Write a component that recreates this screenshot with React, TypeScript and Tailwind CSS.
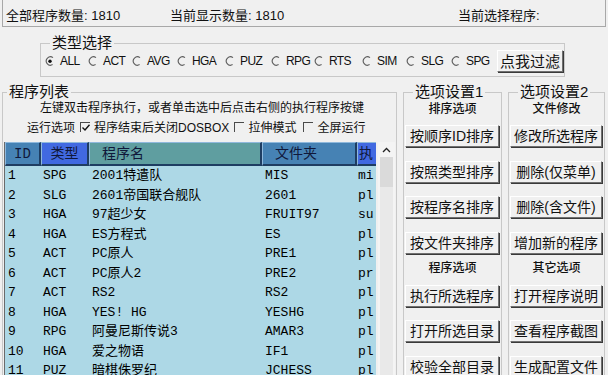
import React from 'react';

const ui = "font-['Liberation_Sans','Noto_Sans_CJK_SC',sans-serif]";
const mono = "font-['Liberation_Mono','Noto_Sans_CJK_SC',monospace]";

const types = [
  { label: 'ALL', w: 'w-[43px]', on: true },
  { label: 'ACT', w: 'w-[44px]' },
  { label: 'AVG', w: 'w-[45px]' },
  { label: 'HGA', w: 'w-[48px]' },
  { label: 'PUZ', w: 'w-[46px]' },
  { label: 'RPG', w: 'w-[43px]' },
  { label: 'RTS', w: 'w-[48px]' },
  { label: 'SIM', w: 'w-[44px]' },
  { label: 'SLG', w: 'w-[45px]' },
  { label: 'SPG', w: 'w-[41px]' },
];

const rows = [
  ['1', 'SPG', '2001特遣队', 'MIS', 'mi'],
  ['2', 'SLG', '2601帝国联合舰队', '2601', 'pl'],
  ['3', 'HGA', '97超少女', 'FRUIT97', 'su'],
  ['4', 'HGA', 'ES方程式', 'ES', 'pl'],
  ['5', 'ACT', 'PC原人', 'PRE1', 'pl'],
  ['6', 'ACT', 'PC原人2', 'PRE2', 'pr'],
  ['7', 'ACT', 'RS2', 'RS2', 'pl'],
  ['8', 'HGA', 'YES! HG', 'YESHG', 'pl'],
  ['9', 'RPG', '阿曼尼斯传说3', 'AMAR3', 'pl'],
  ['10', 'HGA', '爱之物语', 'IF1', 'pl'],
  ['11', 'PUZ', '暗棋侏罗纪', 'JCHESS', 'pl'],
];

const cols = [
  { w: 'w-[36px]', bg: 'bg-[#4682b4]', head: 'ID', cls: 'justify-center', pl: 'pl-[3px]' },
  { w: 'w-[48px]', bg: 'bg-[#4169e1]', head: '类型', cls: 'justify-center', pl: 'pl-[2px]' },
  { w: 'w-[173px]', bg: 'bg-[#5f9ea0]', head: '程序名', cls: 'pl-[12px]', pl: 'pl-[3px]' },
  { w: 'w-[95px]', bg: 'bg-[#4682b4]', head: '文件夹', cls: 'pl-[12px]', pl: 'pl-[3px]' },
  { w: 'w-[70px]', bg: 'bg-[#4169e1]', head: '执', cls: 'pl-[1px]', pl: 'pl-[1px]' },
];

const Radio = ({ on }: { on?: boolean }) => (
  <svg width="10" height="10" viewBox="0 0 10 10" className="shrink-0">
    <path d="M8 1.6 A4.2 4.2 0 1 0 7.6 8.6" fill="none" stroke="#5c5c5c" strokeWidth="1.1" />
    {on && <circle cx="5" cy="5.2" r="1.7" fill="#111" />}
  </svg>
);

const Check = ({ on }: { on?: boolean }) => (
  <span className="relative inline-block w-[10px] h-[10px] border-t border-l border-t-[#4a4a4a] border-l-[#4a4a4a] shrink-0">
    {on && (
      <svg width="10" height="10" viewBox="0 0 10 10" className="absolute left-0 top-0">
        <path d="M1.5 4.5 L4 7 L8.5 1.8" fill="none" stroke="#111" strokeWidth="1.4" />
      </svg>
    )}
  </span>
);

const Btn = ({ children }: { children: React.ReactNode }) => (
  <div className="flex items-center justify-center h-[22px] w-full bg-[#f0f0f0] border border-t-white border-l-white border-r-[#707070] border-b-[#707070] shadow-[1px_1px_0_#3a3a3a] text-[14px] text-[#111] leading-none">
    {children}
  </div>
);

const Panel = ({
  title,
  sub1,
  sub2,
  btnsA,
  btnsB,
  w,
}: {
  title: string;
  sub1: string;
  sub2: string;
  btnsA: string[];
  btnsB: string[];
  w: string;
}) => (
  <fieldset className={'ml-[6px] h-[300px] border border-[#c8c8c8] px-[1px] ' + w}>
    <legend className="ml-[8px] px-[2px] text-[15px] leading-[16px] text-[#111]">{title}</legend>
    <div className="mt-[1px] text-center text-[12px] leading-[16px] font-medium text-[#111]">{sub1}</div>
    <div className="mt-[8px] flex flex-col gap-[13.5px] pr-[1px]">
      {btnsA.map((b) => (
        <Btn key={b}>{b}</Btn>
      ))}
    </div>
    <div className="mt-[6px] text-center text-[12px] leading-[16px] font-medium text-[#111]">{sub2}</div>
    <div className="mt-[9px] flex flex-col gap-[13.5px] pr-[1px]">
      {btnsB.map((b) => (
        <Btn key={b}>{b}</Btn>
      ))}
    </div>
  </fieldset>
);

export default function App() {
  return (
    <div className={'w-[608px] h-[375px] overflow-hidden bg-[#f0f0f0] text-[#111] ' + ui}>
      {/* status bar */}
      <div className="mx-[2px] h-[27px] flex items-center pt-[5px] pl-[3px] border-l border-r border-b border-[#a8a8a8] text-[13px] leading-none">
        <span className="w-[164px]">全部程序数量: 1810</span>
        <span className="w-[288px]">当前显示数量: 1810</span>
        <span>当前选择程序:</span>
      </div>

      {/* type filter */}
      <fieldset className="ml-[40px] mt-[8px] w-[525px] h-[42px] border border-[#c8c8c8] pl-[4px] pr-[1px]">
        <legend className="ml-[5px] px-[2px] text-[15px] leading-[16px]">类型选择</legend>
        <div className="-mt-[1px] flex items-center">
          {types.map((t) => (
            <div key={t.label} className={'flex items-center gap-[5px] ' + t.w}>
              <Radio on={t.on} />
              <span className="text-[12px] leading-none tracking-[-0.6px]">{t.label}</span>
            </div>
          ))}
          <div className="ml-auto w-[66px] h-[22px] flex items-center justify-center bg-[#f0f0f0] border border-t-white border-l-white border-r-[#707070] border-b-[#707070] shadow-[1px_1px_0_#3a3a3a] text-[15px] leading-none">
            点我过滤
          </div>
        </div>
      </fieldset>

      <div className="flex pl-[2px] mt-[7px]">
        {/* program list */}
        <fieldset className="w-[395px] h-[300px] border border-[#c8c8c8]">
          <legend className="ml-[4px] px-[2px] text-[15px] leading-[16px]">程序列表</legend>
          <div className="ml-[37px] text-[12px] leading-[16px]">左键双击程序执行，或者单击选中后点击右侧的执行程序按键</div>
          <div className="ml-[24px] mt-[4px] flex items-center text-[12px] leading-[16px]">
            <span>运行选项</span>
            <span className="ml-[5px] mr-[4px]"><Check on /></span>
            <span>程序结束后关闭DOSBOX</span>
            <span className="ml-[5px] mr-[4px]"><Check /></span>
            <span>拉伸模式</span>
            <span className="ml-[7px] mr-[4px]"><Check /></span>
            <span>全屏运行</span>
          </div>

          <div className="mt-[6px] flex">
            <div className={'ml-[1px] w-[372px] overflow-hidden border-l border-[#6a6a6a] ' + mono}>
              <div className="flex h-[24px] w-[430px]">
                {cols.map((c) => (
                  <div
                    key={c.head}
                    className={
                      'flex items-center shrink-0 border-t border-l border-t-[#8fb8dc] border-l-[#8fb8dc] border-r-2 border-b-2 border-r-[#1e3d62] border-b-[#1e3d62] text-[14px] leading-none text-[#10183a] ' +
                      c.w +
                      ' ' +
                      c.bg +
                      ' ' +
                      c.cls
                    }
                  >
                    {c.head}
                  </div>
                ))}
              </div>
              {rows.map((r) => (
                <div key={r[0]} className="flex h-[19.5px] w-[430px] bg-[#add8e6] text-[13px] leading-none text-black">
                  {r.map((v, i) => (
                    <div
                      key={i}
                      className={'flex items-center shrink-0 whitespace-nowrap overflow-hidden ' + cols[i].w + ' ' + cols[i].pl}
                    >
                      {v}
                    </div>
                  ))}
                </div>
              ))}
            </div>

            {/* scrollbar */}
            <div className="ml-[2px] w-[17px] h-[240px] bg-[#f4f4f4] flex flex-col">
              <div className="h-[15px] flex items-center justify-center">
                <svg width="9" height="6" viewBox="0 0 9 6">
                  <path d="M1 5 L4.5 1.5 L8 5" fill="none" stroke="#222" strokeWidth="1.3" />
                </svg>
              </div>
              <div className="mx-[2px] h-[30px] bg-[#dadada]" />
              <div className="mx-[2px] flex-1 bg-[#e9e9e9]" />
            </div>
          </div>
        </fieldset>

        <Panel
          w="w-[99px]"
          title="选项设置1"
          sub1="排序选项"
          sub2="程序选项"
          btnsA={['按顺序ID排序', '按照类型排序', '按程序名排序', '按文件夹排序']}
          btnsB={['执行所选程序', '打开所选目录', '校验全部目录']}
        />
        <Panel
          w="w-[97px]"
          title="选项设置2"
          sub1="文件修改"
          sub2="其它选项"
          btnsA={['修改所选程序', '删除(仅菜单)', '删除(含文件)', '增加新的程序']}
          btnsB={['打开程序说明', '查看程序截图', '生成配置文件']}
        />
      </div>
    </div>
  );
}
